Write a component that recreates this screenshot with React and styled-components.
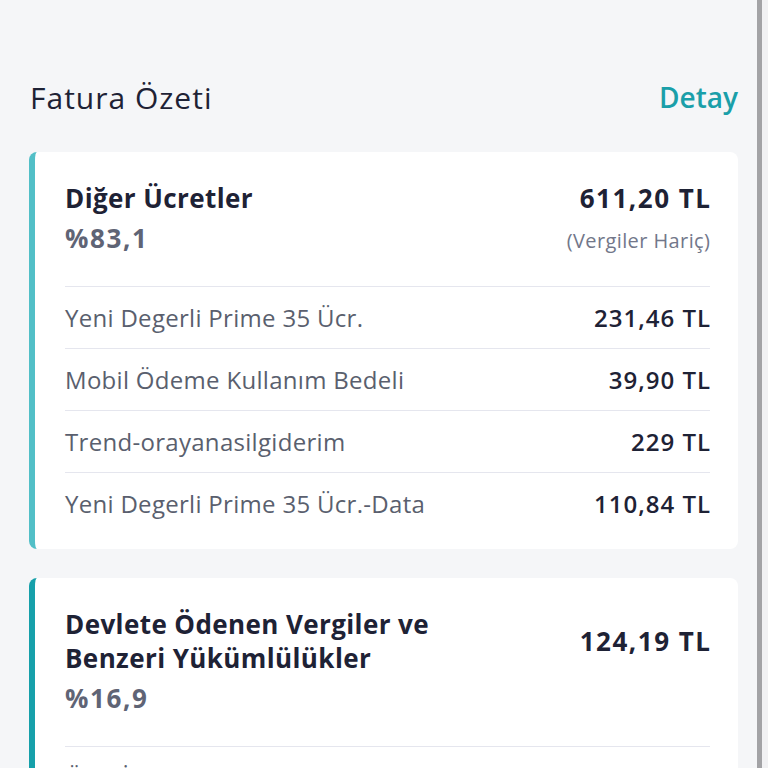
import React from "react";
import styled, { createGlobalStyle } from "styled-components";

const GlobalStyle = createGlobalStyle`
  html, body { margin: 0; padding: 0; }
  body {
    background: #f5f6f8;
    font-family: "Open Sans", "Noto Sans", "Liberation Sans", sans-serif;
    color: #1e2235;
  }
`;

const Page = styled.div`
  display: flex;
  height: 768px;
  overflow: hidden;
`;

const Main = styled.div`
  flex: 1;
  display: flex;
  flex-direction: column;
  min-width: 0;
`;

const Scrollbar = styled.div`
  width: 11px;
  display: flex;
  background: #f1f1f3;
`;

const Thumb = styled.div`
  width: 5px;
  background: #a3a3a6;
`;

const TopCard = styled.div`
  height: 17px;
  background: #ffffff;
  margin-right: 5px;
  border-bottom-right-radius: 6px;
`;

const Section = styled.section`
  padding: 77px 19px 0 29px;
  display: flex;
  flex-direction: column;
  gap: 29px;
`;

const Header = styled.div`
  display: flex;
  align-items: center;
  justify-content: space-between;
  height: 40px;
  padding-left: 1px;
  margin-bottom: 6px;
`;

const HeaderTitle = styled.h2`
  margin: 0;
  font-size: 30px;
  font-weight: 400;
  letter-spacing: 1px;
  color: #1e2235;
`;

const DetailLink = styled.a`
  font-size: 28px;
  font-weight: 600;
  color: #1a9fa9;
  text-decoration: none;
`;

const Card = styled.div`
  background: #ffffff;
  border-radius: 8px;
  border-left: 6px solid ${(p) => p.$accent};
  padding: 29px 28px 15px 30px;
`;

const CardHead = styled.div`
  padding-bottom: 29px;
`;

const TitleRow = styled.div`
  display: flex;
  align-items: center;
  justify-content: space-between;
  gap: 16px;
`;

const CardTitle = styled.div`
  font-size: 26px;
  font-weight: 700;
  line-height: 34px;
  letter-spacing: 0.4px;
  max-width: 390px;
  color: #1e2235;
`;

const Amount = styled.div`
  font-size: 26px;
  font-weight: 700;
  line-height: 34px;
  letter-spacing: 1.5px;
  margin-right: -1.5px;
  color: #1e2235;
  white-space: nowrap;
`;

const SubRow = styled.div`
  display: flex;
  align-items: baseline;
  justify-content: space-between;
  margin-top: 4px;
`;

const Percent = styled.div`
  font-size: 26px;
  font-weight: 700;
  line-height: 38px;
  letter-spacing: 1.6px;
  color: #5f6475;
`;

const Note = styled.div`
  font-size: 20px;
  letter-spacing: 0.4px;
  margin-right: -0.4px;
  color: #72778a;
`;

const Row = styled.div`
  display: flex;
  align-items: center;
  justify-content: space-between;
  height: 61px;
  border-top: 1px solid #e5e6ee;
`;

const RowLabel = styled.span`
  font-size: 24px;
  letter-spacing: 0.3px;
  color: #5a5f6e;
`;

const RowValue = styled.span`
  font-size: 24px;
  font-weight: 600;
  letter-spacing: 1px;
  margin-right: -1px;
  color: #1e2235;
`;

const groups = [
  {
    accent: "#52bfc7",
    title: "Diğer Ücretler",
    pct: "%83,1",
    amount: "611,20 TL",
    note: "(Vergiler Hariç)",
    rows: [
      ["Yeni Degerli Prime 35 Ücr.", "231,46 TL"],
      ["Mobil Ödeme Kullanım Bedeli", "39,90 TL"],
      ["Trend-orayanasilgiderim", "229 TL"],
      ["Yeni Degerli Prime 35 Ücr.-Data", "110,84 TL"],
    ],
  },
  {
    accent: "#16a0aa",
    title: "Devlete Ödenen Vergiler ve Benzeri Yükümlülükler",
    pct: "%16,9",
    amount: "124,19 TL",
    rows: [
      ["Özel İletişim Vergisi", "69,95 TL"],
      ["KDV", "54,24 TL"],
    ],
  },
];

export default function App() {
  return (
    <Page>
      <GlobalStyle />
      <Main>
        <TopCard />
        <Section>
          <Header>
            <HeaderTitle>Fatura Özeti</HeaderTitle>
            <DetailLink href="#">Detay</DetailLink>
          </Header>
          {groups.map((g) => (
            <Card key={g.title} $accent={g.accent}>
              <CardHead>
                <TitleRow>
                  <CardTitle>{g.title}</CardTitle>
                  <Amount>{g.amount}</Amount>
                </TitleRow>
                <SubRow>
                  <Percent>{g.pct}</Percent>
                  {g.note && <Note>{g.note}</Note>}
                </SubRow>
              </CardHead>
              {g.rows.map(([label, value]) => (
                <Row key={label}>
                  <RowLabel>{label}</RowLabel>
                  <RowValue>{value}</RowValue>
                </Row>
              ))}
            </Card>
          ))}
        </Section>
      </Main>
      <Scrollbar>
        <Thumb />
      </Scrollbar>
    </Page>
  );
}
